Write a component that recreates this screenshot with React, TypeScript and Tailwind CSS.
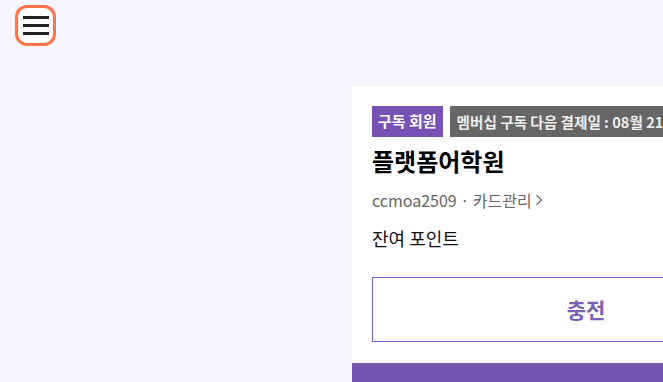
import React from 'react';

const font = { fontFamily: '"Noto Sans CJK KR", "Noto Sans", sans-serif' };

export default function App() {
  return (
    <div className="w-full h-[382px] overflow-hidden bg-[#f6f4fd]" style={font}>
      <div className="pl-[15px] pt-[5px]">
        <button className="w-[41px] h-[41px] rounded-[12px] border-[3px] border-[#ff7446] bg-white flex flex-col items-center justify-center gap-[5px]">
          <span className="block w-[26px] h-[3px] bg-[#222]" />
          <span className="block w-[26px] h-[3px] bg-[#222]" />
          <span className="block w-[26px] h-[3px] bg-[#222]" />
        </button>
      </div>
      <div className="ml-[352px] mt-[40px] w-[468px] bg-white">
        <div className="px-[20px] pt-[20px] pb-[21px]">
          <div className="flex gap-[7px] whitespace-nowrap">
            <span className="h-[31px] px-[6px] flex items-center bg-[#7652b5] text-white text-[15px] font-bold">구독 회원</span>
            <span className="h-[31px] px-[7px] flex items-center bg-[#666666] text-[#eeeeee] text-[14.6px] font-bold">멤버십 구독 다음 결제일 : 08월 21일</span>
          </div>
          <div className="mt-[8px] text-[24px] font-bold text-black leading-[32px]">플랫폼어학원</div>
          <div className="mt-[12px] text-[16px] text-[#666] leading-[22px] flex items-center">
            ccmoa2509 · 카드관리
            <svg width="10" height="14" viewBox="0 0 10 14" className="ml-[2px]">
              <path d="M2.5 2 L7.5 7 L2.5 12" fill="none" stroke="#777" strokeWidth="1.4" />
            </svg>
          </div>
          <div className="mt-[14px] text-[18px] text-[#111] leading-[26px]">잔여 포인트</div>
          <button className="mt-[26px] w-full h-[65px] border border-[#7b5cc2] text-[#7a5fb5] text-[21px] font-bold flex items-center justify-center">
            충전
          </button>
        </div>
        <div className="h-[30px] bg-[#7453b1]" />
      </div>
    </div>
  );
}
